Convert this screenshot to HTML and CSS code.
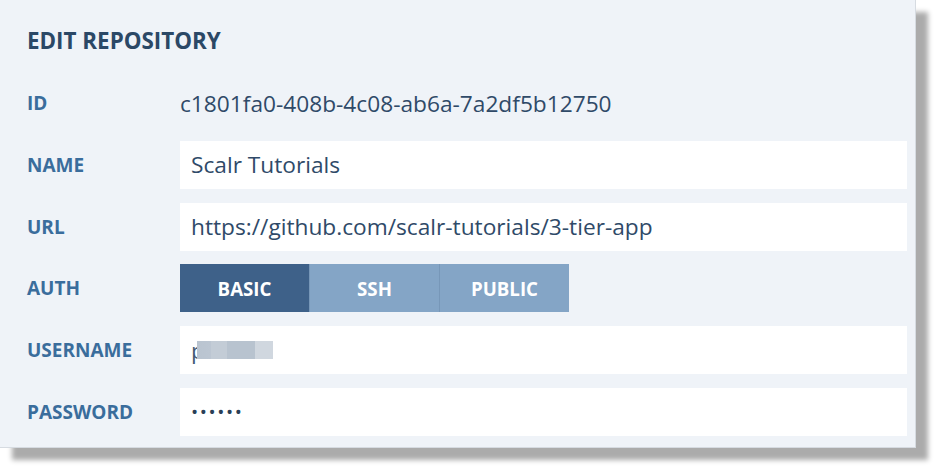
FILE: index.html
```html
<!DOCTYPE html>
<html>
<head>
<meta charset="utf-8">
<link rel="stylesheet" href="styles.css">
</head>
<body>
<div class="panel">
  <h1 class="title">EDIT REPOSITORY</h1>
  <div class="form">
    <div class="label">ID</div>
    <div class="value">c1801fa0-408b-4c08-ab6a-7a2df5b12750</div>

    <div class="label">NAME</div>
    <div class="value field">Scalr Tutorials</div>

    <div class="label">URL</div>
    <div class="value field">https://github.com/scalr-tutorials/3-tier-app</div>

    <div class="label">AUTH</div>
    <div class="seg">
      <div class="seg-btn active">BASIC</div>
      <div class="seg-btn">SSH</div>
      <div class="seg-btn">PUBLIC</div>
    </div>

    <div class="label">USERNAME</div>
    <div class="value field"><span class="redacted"><span class="p">p</span><span class="blob"></span></span></div>

    <div class="label">PASSWORD</div>
    <div class="value field"><span class="dots">••••••</span></div>
  </div>
</div>
</body>
</html>
```

FILE: styles.css
```css
html, body {
  margin: 0;
  padding: 0;
  background: #ffffff;
}
body {
  width: 940px;
  height: 473px;
  overflow: hidden;
  font-family: "Open Sans", "Liberation Sans", sans-serif;
}
.panel {
  width: 916px;
  height: 448px;
  box-sizing: border-box;
  background: #eff3f8;
  border-right: 1px solid #d6dbe1;
  border-bottom: 1px solid #d6dbe1;
  box-shadow: 12px 12px 5px rgba(0, 0, 0, 0.33);
  padding: 28px 8px 0 27px;
}
.title {
  margin: 0;
  font-size: 22.4px;
  font-weight: 700;
  color: #2b4866;
  line-height: 26px;
}
.form {
  margin-top: 25px;
  display: grid;
  grid-template-columns: 153px 1fr;
  grid-auto-rows: 48px;
  row-gap: 13.8px;
  align-items: center;
}
.label {
  font-size: 19px;
  font-weight: 700;
  color: #3a6d9c;
}
.value {
  font-size: 22.7px;
  color: #2f4a68;
  height: 48px;
  display: flex;
  align-items: center;
}
.field {
  background: #ffffff;
  padding-left: 11px;
}
.seg {
  display: flex;
  height: 48px;
}
.seg-btn {
  width: 129px;
  display: flex;
  align-items: center;
  justify-content: center;
  background: #84a5c6;
  color: #ffffff;
  font-size: 18.7px;
  font-weight: 700;
  border-left: 1px solid #7797b8;
}
.seg-btn.active {
  background: #3e6189;
  border-left: none;
}
.redacted {
  display: flex;
  align-items: center;
}
.p {
  color: #445a74;
}
.blob {
  width: 76px;
  height: 18px;
  margin-left: -8px;
  background: linear-gradient(90deg, #b9c4d0 0, #bcc6d2 14px, #c3ccd6 14px, #c3ccd6 30px, #b8c3cf 30px, #b8c3cf 58px, #d0d7df 58px);
  filter: blur(0.6px);
}
.dots {
  font-size: 19px;
  letter-spacing: 1.6px;
  color: #2a3f57;
}
```
